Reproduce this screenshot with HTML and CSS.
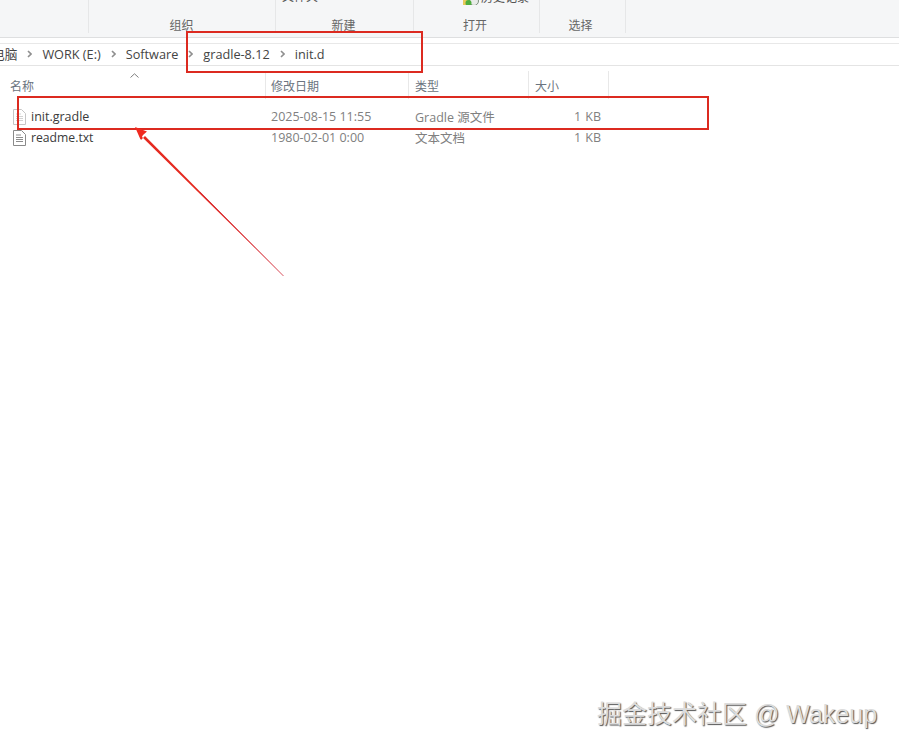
FILE: index.html
```html
<!DOCTYPE html>
<html lang="zh">
<head>
<meta charset="utf-8">
<title>init.d</title>
<link rel="stylesheet" href="styles.css">
</head>
<body>
<div class="window">
  <div class="ribbon">
    <div class="group g1"></div>
    <div class="group g2"><span class="label">组织</span></div>
    <div class="group g3"><span class="cmd">文件夹</span><span class="label">新建</span></div>
    <div class="group g4">
      <span class="cmd hist"><svg class="histicon" viewBox="0 0 18 14"><rect x="1" y="5" width="9" height="9" fill="#e8c95a"/><circle cx="12" cy="10" r="4.500" fill="#e8ebe8" stroke="#7d8f7d"/><circle cx="6.500" cy="12" r="3" fill="#4fae3f"/></svg>历史记录</span>
      <span class="label">打开</span>
    </div>
    <div class="group g5"><span class="label">选择</span></div>
  </div>
  <div class="address">
    <span class="crumb cut">电脑</span>
    <svg class="chev" viewBox="0 0 5 8"><path d="M1 1 4 4 1 7" /></svg>
    <span class="crumb">WORK (E:)</span>
    <svg class="chev" viewBox="0 0 5 8"><path d="M1 1 4 4 1 7" /></svg>
    <span class="crumb">Software</span>
    <svg class="chev" viewBox="0 0 5 8"><path d="M1 1 4 4 1 7" /></svg>
    <span class="crumb">gradle-8.12</span>
    <svg class="chev" viewBox="0 0 5 8"><path d="M1 1 4 4 1 7" /></svg>
    <span class="crumb">init.d</span>
  </div>
  <div class="header">
    <svg class="sort" viewBox="0 0 9 5"><path d="M.5 4.500 4.500.8 8.500 4.500" fill="none" stroke="#7d7d7d"/></svg>
    <div class="col c-name">名称</div>
    <div class="col c-date">修改日期</div>
    <div class="col c-type">类型</div>
    <div class="col c-size">大小</div>
  </div>
  <div class="row row-first">
    <div class="c-name cell-name">
      <svg class="file faded" viewBox="0 0 13 16"><path d="M.5.5h8l4 4v11H.5z" fill="#fff" stroke="#c6c6c6"/><path d="M3 5h5M3 7.500h7M3 9.500h7M3 11.500h7" stroke="#d2d2d2"/></svg>
      <span>init.gradle</span>
    </div>
    <div class="c-date cell">2025-08-15 11:55</div>
    <div class="c-type cell">Gradle 源文件</div>
    <div class="c-size cell size">1 KB</div>
  </div>
  <div class="row">
    <div class="c-name cell-name">
      <svg class="file" viewBox="0 0 13 16"><path d="M.5.5h8l4 4v11H.5z" fill="#fff" stroke="#8a8a8a"/><path d="M3 5h5M3 7.500h7M3 9.500h7M3 11.500h7" stroke="#8c8c8c"/></svg>
      <span class="readme">readme.txt</span>
    </div>
    <div class="c-date cell">1980-02-01 0:00</div>
    <div class="c-type cell">文本文档</div>
    <div class="c-size cell size">1 KB</div>
  </div>
</div>

<div class="mark mark-path"></div>
<div class="mark mark-row"></div>
<svg class="arrow" viewBox="0 0 899 751">
  <path d="M283.500 276 L145 136 L141 140 L139 134 Z" fill="#e52a20"/>
  <path d="M283.500 276 L200 192" stroke="#cf3040" stroke-width=".8" fill="none"/>
  <path d="M135 127 L147 131.500 L143 135 L140.500 139.500 Z" fill="#f02a20"/>
</svg>
<div class="watermark">掘金技术社区 @ Wakeup</div>
</body>
</html>
```
FILE: styles.css
```css
* { box-sizing: border-box; }
html, body { margin: 0; padding: 0; }
body {
  width: 899px;
  height: 751px;
  background: #fff;
  overflow: hidden;
  position: relative;
  font-family: "Open Sans", "Noto Sans CJK SC", sans-serif;
  color: #3a3a3a;
}
.window { display: flex; flex-direction: column; }

.ribbon {
  height: 38px;
  display: flex;
  background: #f5f6f7;
  border-bottom: 1px solid #dedfe0;
  overflow: hidden;
}
.group {
  position: relative;
  height: 33px;
  border-right: 1px solid #e6e7e8;
  display: flex;
  justify-content: center;
  font-size: 12px;
  color: #666;
}
.g1 { width: 89px; }
.g2 { width: 187px; }
.g3 { width: 138px; }
.g4 { width: 126px; }
.g5 { width: 86px; }
.label { position: absolute; left: 0; right: 0; bottom: -1px; text-align: center; line-height: 16px; height: 16px; padding-right: 3px; }
.g2 .label { padding-right: 1px; }
.g3 .label { padding-right: 2px; }
.g5 .label { padding-right: 4px; }
.cmd { position: absolute; left: 6px; top: -11px; line-height: 16px; font-size: 12px; color: #555; }
.hist { left: 48px; display: flex; align-items: center; gap: 1px; top: -10px; }
.histicon { width: 18px; height: 14px; }

.address {
  margin-top: 5px;
  height: 23px;
  padding-bottom: 2px;
  border-top: 1px solid #e8e8e8;
  border-bottom: 1px solid #e4e4e4;
  display: flex;
  align-items: center;
  font-size: 12.700px;
  color: #444;
  white-space: nowrap;
  overflow: hidden;
}
.crumb.cut { margin-left: -8px; }
.chev {
  width: 5px;
  height: 8px;
  flex: none;
  margin: 0 10px;
  fill: none;
  stroke: #8f8f8f;
  stroke-width: 1.600;
}

.header {
  position: relative;
  height: 33px;
  display: flex;
  font-size: 12px;
  color: #6b7480;
}
.sort { position: absolute; left: 130px; top: 7px; width: 9px; height: 5px; }
.col { height: 28px; margin-top: 5px; line-height: 26px; padding-top: 3px; border-right: 1px solid #e8e8e8; padding-left: 5px; }
.col.c-name { padding-left: 10px; }
.col.c-type, .col.c-size { padding-left: 6px; }
.c-name { width: 266px; }
.c-date { width: 143px; }
.c-type { width: 120px; }
.c-size { width: 80px; }

.row { display: flex; height: 21px; align-items: center; font-size: 12.500px; }
.row-first { margin-top: 7px; }
.cell { color: #808080; padding-left: 5px; }
.c-type.cell { padding-left: 6px; }
.cell-name { display: flex; align-items: center; gap: 5px; padding-left: 13px; color: #3a3a3a; }
.readme { font-size: 12.200px; }
.file { width: 13px; height: 16px; flex: none; }
.size { text-align: right; padding-right: 8px; word-spacing: 1px; }

.mark { position: absolute; border: 2px solid #dc2a20; }
.mark-path { left: 186px; top: 31px; width: 237px; height: 42px; }
.mark-row { left: 17px; top: 96px; width: 692px; height: 34px; }
.arrow { position: absolute; left: 0; top: 0; width: 899px; height: 751px; pointer-events: none; }

.watermark {
  position: absolute;
  left: 597px;
  top: 699px;
  font-family: "Liberation Sans", "Noto Sans CJK SC", sans-serif;
  font-size: 25px;
  line-height: 30px;
  white-space: nowrap;
  color: #dcdcdc;
  text-shadow: 1px 1px 1px #555, -1px -1px 1px #fff;
}
```
